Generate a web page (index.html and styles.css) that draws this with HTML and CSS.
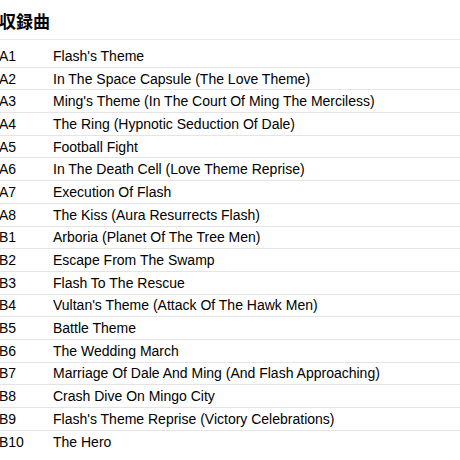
FILE: index.html
```html
<!DOCTYPE html>
<html lang="ja">
  <head>
    <meta charset="UTF-8" />
    <meta name="viewport" content="width=device-width, initial-scale=1.0" />
    <title>収録曲</title>
    <link rel="stylesheet" href="styles.css">
  </head>
  <body>
    <section class="tracklist">
      <h2 class="tracklist-title">収録曲</h2>
      <div class="tracks">
        <div class="track"><span class="track-pos">A1</span><span class="track-title">Flash's Theme</span></div>
        <div class="track"><span class="track-pos">A2</span><span class="track-title">In The Space Capsule (The Love Theme)</span></div>
        <div class="track"><span class="track-pos">A3</span><span class="track-title">Ming's Theme (In The Court Of Ming The Merciless)</span></div>
        <div class="track"><span class="track-pos">A4</span><span class="track-title">The Ring (Hypnotic Seduction Of Dale)</span></div>
        <div class="track"><span class="track-pos">A5</span><span class="track-title">Football Fight</span></div>
        <div class="track"><span class="track-pos">A6</span><span class="track-title">In The Death Cell (Love Theme Reprise)</span></div>
        <div class="track"><span class="track-pos">A7</span><span class="track-title">Execution Of Flash</span></div>
        <div class="track"><span class="track-pos">A8</span><span class="track-title">The Kiss (Aura Resurrects Flash)</span></div>
        <div class="track"><span class="track-pos">B1</span><span class="track-title">Arboria (Planet Of The Tree Men)</span></div>
        <div class="track"><span class="track-pos">B2</span><span class="track-title">Escape From The Swamp</span></div>
        <div class="track"><span class="track-pos">B3</span><span class="track-title">Flash To The Rescue</span></div>
        <div class="track"><span class="track-pos">B4</span><span class="track-title">Vultan's Theme (Attack Of The Hawk Men)</span></div>
        <div class="track"><span class="track-pos">B5</span><span class="track-title">Battle Theme</span></div>
        <div class="track"><span class="track-pos">B6</span><span class="track-title">The Wedding March</span></div>
        <div class="track"><span class="track-pos">B7</span><span class="track-title">Marriage Of Dale And Ming (And Flash Approaching)</span></div>
        <div class="track"><span class="track-pos">B8</span><span class="track-title">Crash Dive On Mingo City</span></div>
        <div class="track"><span class="track-pos">B9</span><span class="track-title">Flash's Theme Reprise (Victory Celebrations)</span></div>
        <div class="track"><span class="track-pos">B10</span><span class="track-title">The Hero</span></div>
      </div>
    </section>
  </body>
</html>
```

FILE: styles.css
```css
body {
  margin: 0;
  background: #fff;
  color: #000;
  font-family: "Liberation Sans", Arial, "Noto Sans CJK JP", sans-serif;
}

.tracklist {
  margin-left: -1px;
}

.tracklist-title {
  margin: 0 0 5px;
  padding-top: 11px;
  box-sizing: border-box;
  height: 40px;
  font-size: 17px;
  font-weight: bold;
  line-height: 20px;
  border-bottom: 1px solid #e8e8e8;
  font-family: "Noto Sans CJK JP", sans-serif;
}

.track {
  display: flex;
  align-items: center;
  height: 22.7px;
  box-sizing: border-box;
  border-bottom: 1px solid #e4e4e4;
  font-size: 14px;
}

.track:last-child {
  border-bottom: none;
}

.track-pos {
  width: 54px;
  flex-shrink: 0;
}
```
